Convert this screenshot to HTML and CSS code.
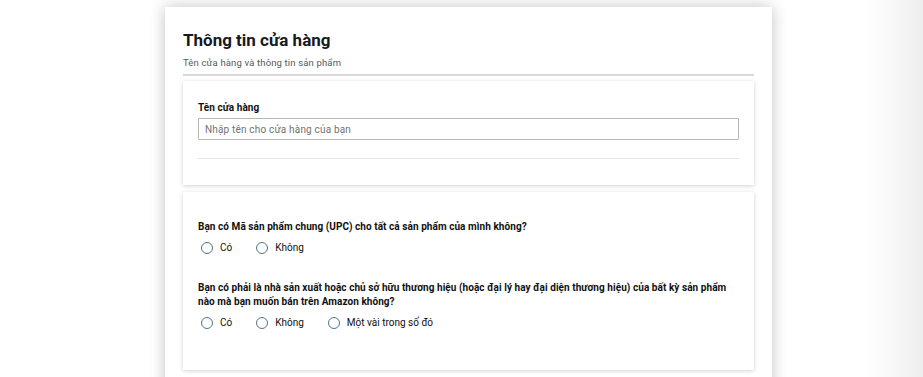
FILE: index.html
```html
<!DOCTYPE html>
<html lang="vi">
<head>
<meta charset="utf-8">
<title>Thông tin cửa hàng</title>
<link rel="stylesheet" href="styles.css">
</head>
<body>
<div class="page">
  <main class="panel">
    <header class="panel-head">
      <h1 class="title">Thông tin cửa hàng</h1>
      <p class="subtitle">Tên cửa hàng và thông tin sản phẩm</p>
    </header>
    <section class="box box-name">
      <label class="field-label" for="storeName">Tên cửa hàng</label>
      <input class="text-input" id="storeName" type="text" placeholder="Nhập tên cho cửa hàng của bạn">
      <hr class="box-rule">
    </section>
    <section class="box box-questions">
      <div class="question">
        <p class="q-text">Bạn có Mã sản phẩm chung (UPC) cho tất cả sản phẩm của mình không?</p>
        <div class="options">
          <label class="option"><input class="radio" type="radio" name="upc"><span>Có</span></label>
          <label class="option"><input class="radio" type="radio" name="upc"><span>Không</span></label>
        </div>
      </div>
      <div class="question">
        <p class="q-text">Bạn có phải là nhà sản xuất hoặc chủ sở hữu thương hiệu (hoặc đại lý hay đại diện thương hiệu) của bất kỳ sản phẩm nào mà bạn muốn bán trên Amazon không?</p>
        <div class="options">
          <label class="option"><input class="radio" type="radio" name="brand"><span>Có</span></label>
          <label class="option"><input class="radio" type="radio" name="brand"><span>Không</span></label>
          <label class="option"><input class="radio" type="radio" name="brand"><span>Một vài trong số đó</span></label>
        </div>
      </div>
    </section>
  </main>
</div>
</body>
</html>
```

FILE: styles.css
```css
* { box-sizing: border-box; }
html, body { height: 100%; }
body {
  margin: 0;
  overflow: hidden;
  font-family: "Roboto", "Noto Sans", sans-serif;
  color: #0f1111;
  background: linear-gradient(to right, #ffffff 0, #ffffff 866px, #eeeeee 923px);
}
.page {
  padding: 7px 0 0 165px;
}
.panel {
  width: 607px;
  min-height: 400px;
  background: #fff;
  padding: 20px 18px 0 18px;
  box-shadow: 0 0 15px rgba(0, 0, 0, 0.24);
}
.panel-head {
  border-bottom: 2px solid #d9d9d9;
  padding-bottom: 4px;
}
.title {
  margin: 0;
  font-size: 17px;
  line-height: 26px;
  font-weight: 700;
  color: #16191f;
}
.subtitle {
  margin: 3px 0 0;
  font-size: 9.5px;
  line-height: 14px;
  letter-spacing: 0.15px;
  color: #555a5a;
}
.box {
  background: #fff;
  box-shadow: 0 1px 4px rgba(0, 0, 0, 0.18);
  padding-left: 15px;
  padding-right: 15px;
}
.box-name {
  margin-top: 5px;
  padding-top: 20px;
  padding-bottom: 26px;
}
.field-label {
  display: block;
  font-size: 10px;
  line-height: 14px;
  font-weight: 700;
  letter-spacing: 0.05px;
  color: #0f1111;
}
.text-input {
  display: block;
  width: 100%;
  height: 22px;
  margin: 3px 0 0;
  padding: 0 6px;
  border: 1px solid #b5b8b8;
  border-radius: 1px;
  font-family: inherit;
  font-size: 10px;
  letter-spacing: 0.18px;
  color: #0f1111;
  outline: none;
}
.text-input::placeholder { color: #6f7373; }
.box-rule {
  margin: 18px 0 0;
  border: 0;
  border-top: 1px solid #e3e5e5;
}
.box-questions {
  margin-top: 7px;
  padding-top: 28px;
  padding-bottom: 40px;
}
.question + .question { margin-top: 26px; }
.q-text {
  margin: 0;
  font-size: 10px;
  line-height: 14px;
  font-weight: 700;
  letter-spacing: 0.06px;
  color: #0f1111;
}
.options {
  display: flex;
  align-items: center;
  gap: 24px;
  margin-top: 7px;
  padding-left: 3px;
}
.option {
  display: flex;
  align-items: center;
  gap: 7px;
  font-size: 10px;
  line-height: 14px;
  color: #0f1111;
}
.radio {
  appearance: none;
  -webkit-appearance: none;
  margin: 0;
  width: 12px;
  height: 12px;
  border: 1px solid #4f7589;
  border-radius: 50%;
  background: #fff;
}
```
